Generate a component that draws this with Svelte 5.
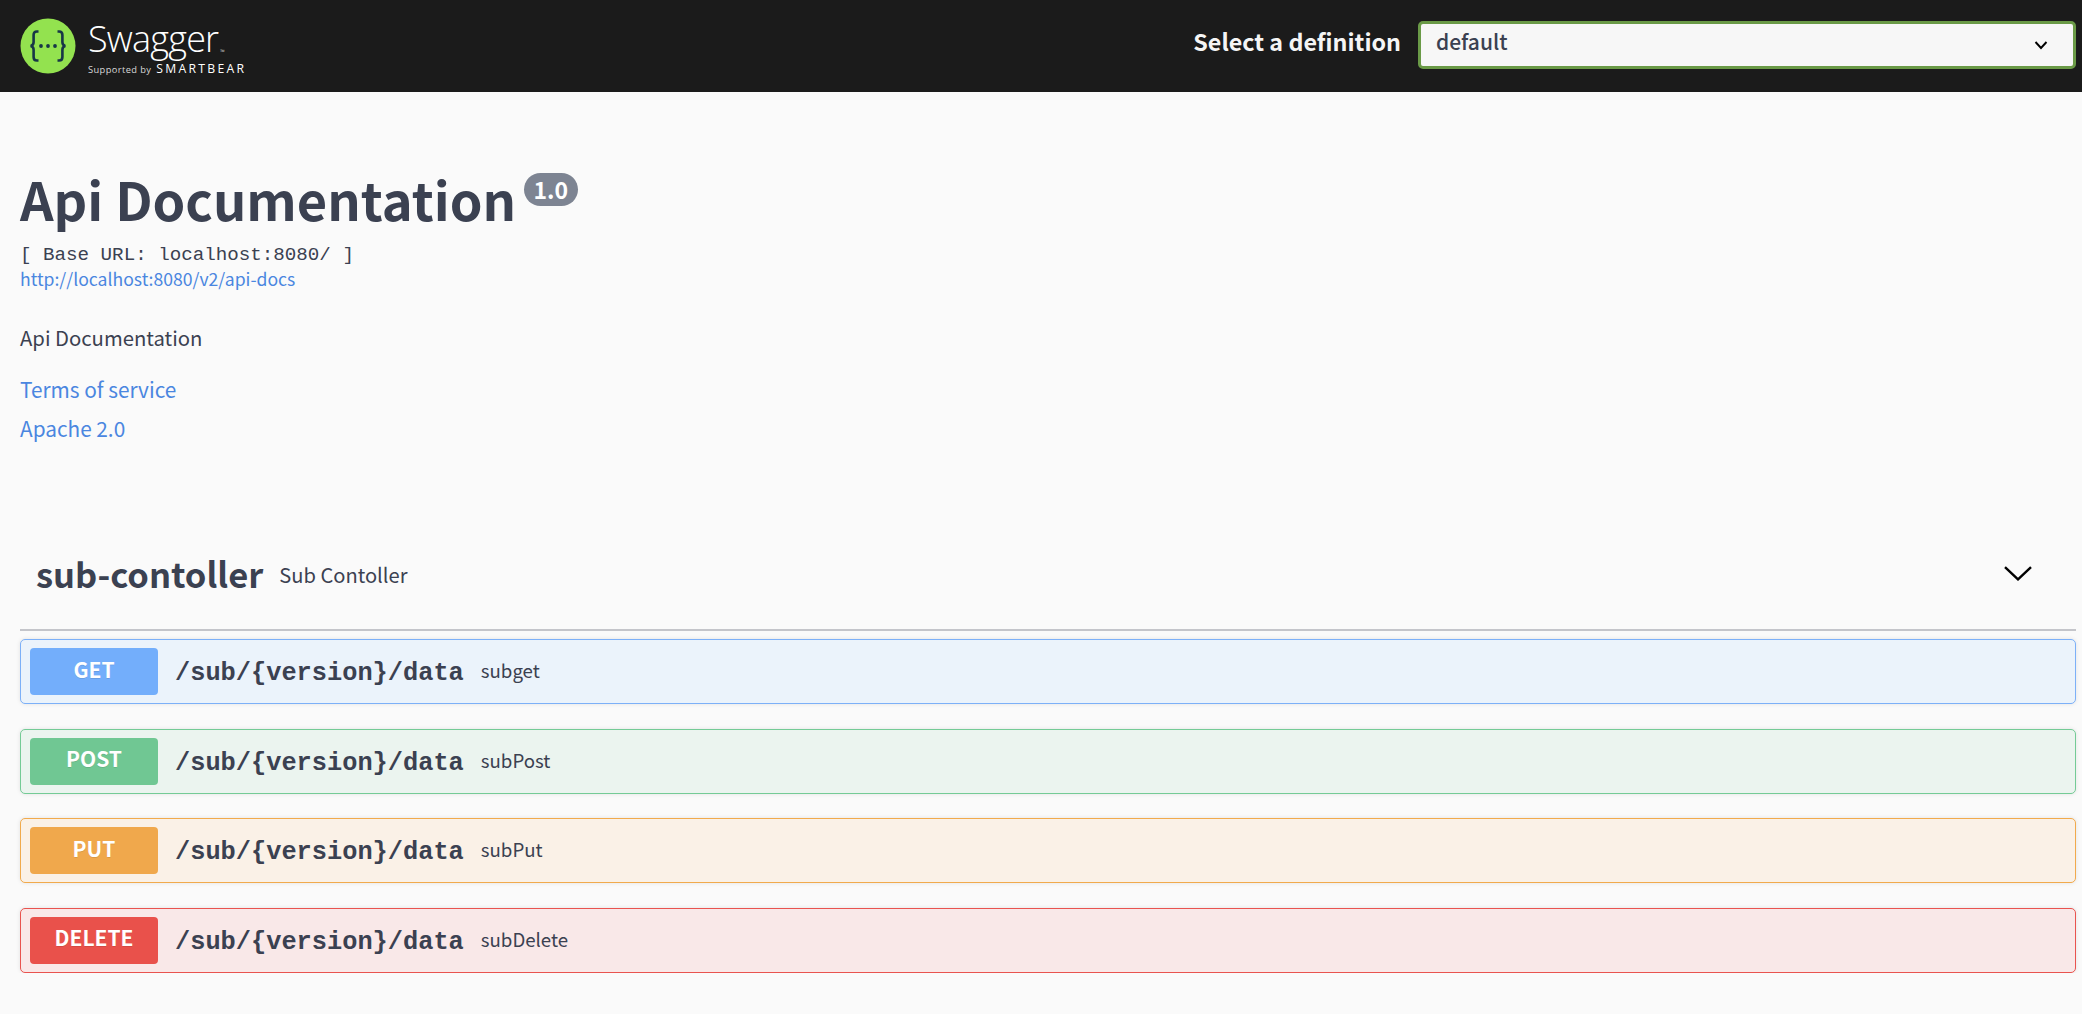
<script lang="ts">
  // Swagger UI page: top bar, API info block and one tag section with four operations
  type Operation = { method: string; path: string; summary: string }

  const operations: Operation[] = [
    { method: 'get', path: '/sub/{version}/data', summary: 'subget' },
    { method: 'post', path: '/sub/{version}/data', summary: 'subPost' },
    { method: 'put', path: '/sub/{version}/data', summary: 'subPut' },
    { method: 'delete', path: '/sub/{version}/data', summary: 'subDelete' },
  ]

  let definition = $state('default')
  let open = $state(true)
</script>

<header class="topbar">
  <a class="logo" href="#top">
    <svg class="logo-mark" viewBox="0 0 56 56" aria-hidden="true">
      <circle cx="28" cy="28" r="27.5" fill="#93e24f" />
      <path d="M18.5 13.5h-1.6c-2.2 0-3.3 1.3-3.3 3.6v7.2c0 2.1-1 3.3-3 3.7 2 .4 3 1.6 3 3.7v7.2c0 2.3 1.1 3.6 3.3 3.6h1.6" fill="none" stroke="#173647" stroke-width="2.6" />
      <path d="M37.5 13.5h1.6c2.2 0 3.3 1.3 3.3 3.6v7.2c0 2.1 1 3.3 3 3.7-2 .4-3 1.6-3 3.7v7.2c0 2.3-1.1 3.6-3.3 3.6h-1.6" fill="none" stroke="#173647" stroke-width="2.6" />
      <circle cx="21" cy="28" r="1.9" fill="#173647" />
      <circle cx="28" cy="28" r="1.9" fill="#173647" />
      <circle cx="35" cy="28" r="1.9" fill="#173647" />
    </svg>
    <span class="logo-text">
      <span class="logo-name">Swagger<sup>™</sup></span>
      <span class="logo-sub">Supported by <b>SMARTBEAR</b></span>
    </span>
  </a>
  <label class="definition">
    <span class="definition-label">Select a definition</span>
    <span class="select-wrap">
      <select bind:value={definition}>
        <option value="default">default</option>
      </select>
      <svg class="select-arrow" viewBox="0 0 14 10" aria-hidden="true">
        <path d="M1.5 2 7 8l5.5-6" fill="none" stroke="#000" stroke-width="1.9" />
      </svg>
    </span>
  </label>
</header>

<main>
  <section class="info">
    <h1>Api Documentation <small>1.0</small></h1>
    <pre class="base-url">[ Base URL: localhost:8080/ ]</pre>
    <a class="spec" href="#top">http://localhost:8080/v2/api-docs</a>
    <p class="description">Api Documentation</p>
    <a class="plain" href="#top">Terms of service</a>
    <a class="plain" href="#top">Apache 2.0</a>
  </section>

  <section class="tag">
    <button class="tag-head" onclick={() => (open = !open)}>
      <span class="tag-name">sub-contoller</span>
      <span class="tag-desc">Sub Contoller</span>
      <svg class="tag-arrow" class:closed={!open} viewBox="0 0 28 15" aria-hidden="true">
        <path d="M1 1.2 14 13.4 27 1.2" fill="none" stroke="#000" stroke-width="2.4" />
      </svg>
    </button>
    {#if open}
      <div class="ops">
        {#each operations as op}
          <div class="op {op.method}">
            <span class="method">{op.method.toUpperCase()}</span>
            <span class="path">{op.path}</span>
            <span class="summary">{op.summary}</span>
          </div>
        {/each}
      </div>
    {/if}
  </section>
</main>

<style>
  :global(body) {
    background: #fafafa;
    color: #3b4151;
    font-family: "Noto Sans CJK KR", "Noto Sans", sans-serif;
  }
  a { text-decoration: none; }

  .topbar {
    height: 92px;
    box-sizing: border-box;
    background: #1b1b1b;
    display: flex;
    align-items: center;
    justify-content: space-between;
    padding: 0 6px 3px 20px;
  }
  .logo { display: flex; align-items: center; gap: 12px; color: #fff; margin-top: 3px; }
  .logo-mark { width: 56px; height: 56px; flex-shrink: 0; }
  .logo-text { display: flex; flex-direction: column; padding-top: 8px; }
  .logo-name { font-family: "Open Sans", sans-serif; font-size: 36px; line-height: 24px; font-weight: 300; letter-spacing: -0.8px; }
  .logo-name sup { font-size: 6px; vertical-align: -2px; margin-left: 2px; }
  .logo-sub { font-family: "Open Sans", sans-serif; font-size: 9.3px; line-height: 8px; margin-top: 1px; color: #d8d8d8; letter-spacing: 0.4px; white-space: nowrap; }
  .logo-sub b { font-weight: 400; font-size: 12.2px; letter-spacing: 2.3px; color: #fff; margin-left: 2px; }

  .definition { display: flex; align-items: center; gap: 17px; color: #f5f5f5; font-size: 23.3px; font-weight: 700; }
  .definition-label { padding-bottom: 8px; }
  .select-wrap { position: relative; display: block; }
  select {
    display: block;
    appearance: none;
    width: 658px;
    height: 48px;
    box-sizing: border-box;
    border: 3px solid #6a9a47;
    border-radius: 5px;
    background: #f7f7f7;
    color: #3b4151;
    font-family: inherit;
    font-size: 21px;
    font-weight: 500;
    padding: 0 15px 8px;
  }
  .select-arrow { position: absolute; right: 28px; top: 19px; width: 14px; height: 10px; pointer-events: none; }

  main { padding: 0 6px 0 20px; }

  .info { padding-top: 65px; display: flex; flex-direction: column; align-items: flex-start; }
  h1 { margin: 0; font-size: 52.4px; line-height: 82px; font-weight: 600; color: #3b4151; }
  h1 small {
    display: inline-block;
    vertical-align: 22px;
    background: #7d8492;
    color: #fff;
    font-size: 23px;
    line-height: 33px;
    font-weight: 600;
    padding: 0 9.5px;
    border-radius: 76px;
    margin-left: -4px;
  }
  .base-url { margin: 7px 0 0; font-family: "Liberation Mono", monospace; font-size: 19.2px; line-height: 18.3px; color: #3b4151; }
  .spec { color: #4a86e0; font-size: 17.6px; line-height: 30px; }
  .description { margin: 28px 0 0; font-size: 20.3px; line-height: 30px; color: #3b4151; }
  .plain { color: #4a86e0; font-size: 20.8px; line-height: 39px; }
  .description + .plain { margin-top: 18px; }

  .tag { margin-top: 66px; }
  .tag-head {
    width: 100%;
    height: 117px;
    box-sizing: border-box;
    display: flex;
    align-items: center;
    gap: 16px;
    padding: 3px 44px 0 16px;
    background: none;
    border: 0;
    border-bottom: 2px solid #c4c5ca;
    color: #3b4151;
    font-family: inherit;
    cursor: pointer;
  }
  .tag-name { font-size: 34.5px; font-weight: 600; }
  .tag-desc { font-size: 20.1px; padding-top: 3px; }
  .tag-arrow { margin-left: auto; width: 28px; height: 15px; }
  .tag-arrow.closed { transform: rotate(-90deg); }

  .ops { display: flex; flex-direction: column; gap: 24.5px; padding-top: 8px; }
  .op {
    height: 65px;
    box-sizing: border-box;
    display: flex;
    align-items: center;
    padding: 0 9px;
    border: 1px solid;
    border-radius: 5px;
    box-shadow: 0 0 4px rgba(0, 0, 0, 0.1);
  }
  .method {
    width: 128px;
    height: 47px;
    flex-shrink: 0;
    display: flex;
    align-items: center;
    justify-content: center;
    padding-bottom: 6px;
    box-sizing: border-box;
    border-radius: 4px;
    color: #fff;
    font-size: 21px;
    font-weight: 700;
    text-shadow: 0 1px 0 rgba(0, 0, 0, 0.1);
  }
  .path { margin-left: 17px; padding-top: 4px; font-family: "Liberation Mono", monospace; font-size: 25.33px; font-weight: 700; color: #3b4151; }
  .summary { margin-left: 17px; font-size: 18.67px; padding-bottom: 4px; color: #3b4151; }

  .get { background: #ebf3fb; border-color: #7cb0f8; }
  .get .method { background: #73aefb; }
  .post { background: #ebf4ef; border-color: #74cb96; }
  .post .method { background: #70c793; }
  .put { background: #faf1e7; border-color: #f1aa4c; }
  .put .method { background: #f0a84c; }
  .delete { background: #f9e8e8; border-color: #e9534f; }
  .delete .method { background: #e9514b; }
</style>
